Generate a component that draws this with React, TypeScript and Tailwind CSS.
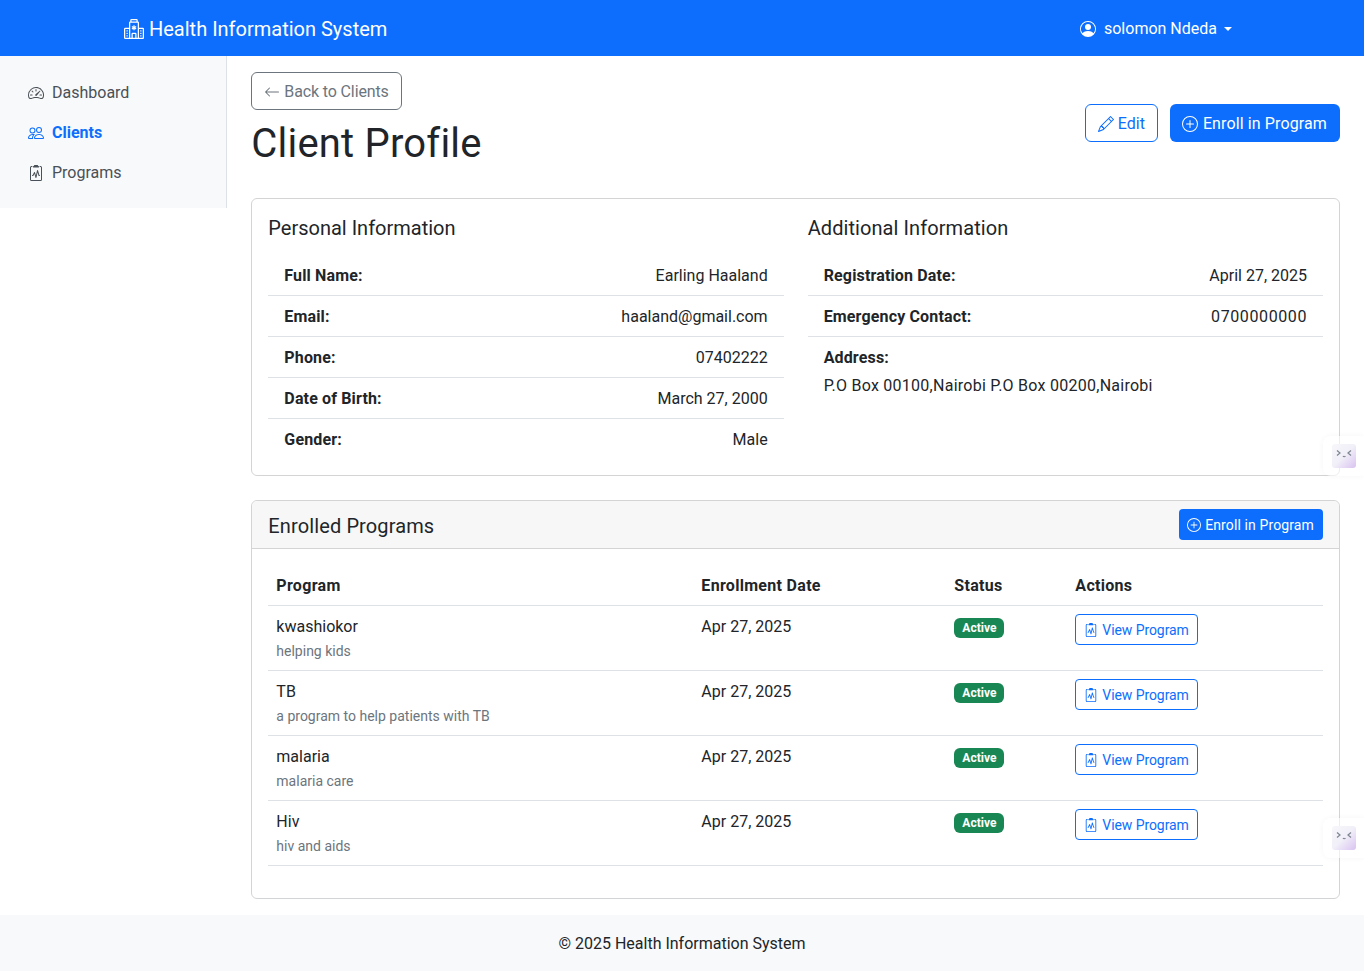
import {
  BsArrowLeft,
  BsClipboard2Pulse,
  BsHospital,
  BsPencil,
  BsPeople,
  BsPersonCircle,
  BsPlusCircle,
  BsSpeedometer2,
} from "react-icons/bs";

const PERSONAL = [
  ["Full Name:", "Earling Haaland"],
  ["Email:", "haaland@gmail.com"],
  ["Phone:", "07402222"],
  ["Date of Birth:", "March 27, 2000"],
  ["Gender:", "Male"],
];

const PROGRAMS = [
  { name: "kwashiokor", note: "helping kids" },
  { name: "TB", note: "a program to help patients with TB" },
  { name: "malaria", note: "malaria care" },
  { name: "Hiv", note: "hiv and aids" },
];

const NAV_ITEMS = [
  { label: "Dashboard", icon: BsSpeedometer2, active: false },
  { label: "Clients", icon: BsPeople, active: true },
  { label: "Programs", icon: BsClipboard2Pulse, active: false },
];

function InfoRow({ label, value, last, valueClass = "" }: { label: string; value: string; last?: boolean; valueClass?: string }) {
  return (
    <div className={`flex justify-between px-4 pt-[9px] pb-[7px] ${last ? "" : "border-b border-[#dee2e6]"}`}>
      <span className="font-bold tracking-[0.15px]">{label}</span>
      <span className={valueClass}>{value}</span>
    </div>
  );
}

function FloatingTab({ top }: { top: string }) {
  return (
    <div className={`absolute right-0 ${top} flex h-10 w-[41px] items-center justify-start rounded-l-lg bg-white/60 pl-[9px] shadow-[0_0_6px_rgba(0,0,0,0.04)]`}>
      <div className="h-6 w-6 rounded-[3px] bg-gradient-to-br from-[#f6f7fb] via-[#f1eff8] to-[#d9c2f0]">
        <svg viewBox="0 0 24 24" className="h-6 w-6" fill="none" stroke="#7d8590" strokeWidth="1.2">
          <path d="M5 6.5 8 9 5 11.5" />
          <path d="M19 6.5 16 9 19 11.5" />
          <path d="M11 12c.6 1 1.8 1 2.4 0" />
        </svg>
      </div>
    </div>
  );
}

export default function App() {
  return (
    <div className="relative flex min-h-screen flex-col overflow-hidden bg-white font-['Roboto',sans-serif] text-base leading-6 text-[#212529]">
      <header className="h-14 bg-[#0d6efd] text-white">
        <div className="mx-auto flex h-full w-[1140px] items-center justify-between px-3 pt-[2px]">
          <div className="flex items-center gap-[5px] text-xl">
            <BsHospital className="h-5 w-5" />
            Health Information System
          </div>
          <div className="flex items-center">
            <BsPersonCircle className="mr-2 ml-[1px] h-4 w-4" />
            solomon Ndeda
            <span className="ml-[7px] mr-2 h-0 w-0 border-x-4 border-t-4 border-x-transparent border-t-white" />
          </div>
        </div>
      </header>

      <div className="flex flex-1 items-start">
        <aside className="w-[227.33px] shrink-0 border-r border-[#dee2e6] bg-[#f8f9fa] px-3 py-4">
          <nav className="flex flex-col">
            {NAV_ITEMS.map(({ label, icon: Icon, active }) => (
              <a
                key={label}
                className={`flex items-center gap-2 px-4 pt-[9px] pb-[7px] ${active ? "font-bold text-[#0d6efd]" : "text-[#495057]"}`}
              >
                <Icon className="h-4 w-4" />
                {label}
              </a>
            ))}
          </nav>
        </aside>

        <main className="min-w-0 flex-1 px-6 pt-4 pb-4">
          <div className="mb-6 flex items-center justify-between">
            <div>
              <a className="mb-2 inline-flex h-[38px] items-center gap-1 rounded-md border border-[#6c757d] px-3 pt-[2px] tracking-[-0.13px] text-[#6c757d]">
                <BsArrowLeft className="h-4 w-4" />
                Back to Clients
              </a>
              <h1 className="mb-[6px] pt-[2px] text-[40px] leading-[48px] tracking-[0.2px]">Client Profile</h1>
            </div>
            <div className="flex gap-3">
              <a className="inline-flex h-[38px] items-center gap-1 rounded-md border border-[#0d6efd] px-3 pt-[2px] text-[#0d6efd]">
                <BsPencil className="h-4 w-4" />
                Edit
              </a>
              <a className="inline-flex h-[38px] items-center gap-[5px] rounded-md bg-[#0d6efd] pt-[2px] pr-[13px] pl-3 tracking-[0.12px] text-white">
                <BsPlusCircle className="h-4 w-4" />
                Enroll in Program
              </a>
            </div>
          </div>

          <section className="mb-6 grid grid-cols-2 gap-6 rounded-md border border-[#d3d4d5] p-4">
            <div>
              <h5 className="mb-[15px] pt-px text-xl leading-6">Personal Information</h5>
              {PERSONAL.map(([label, value], i) => (
                <InfoRow key={label} label={label} value={value} last={i === PERSONAL.length - 1} />
              ))}
            </div>
            <div>
              <h5 className="mb-[15px] pt-px text-xl leading-6 tracking-[0.08px]">Additional Information</h5>
              <InfoRow label="Registration Date:" value="April 27, 2025" />
              <InfoRow label="Emergency Contact:" value="0700000000" valueClass="tracking-[0.6px]" />
              <div className="px-4 pt-[9px] pb-[7px]">
                <div className="mb-1 font-bold tracking-[0.15px]">Address:</div>
                <div className="tracking-[0.26px]">P.O Box 00100,Nairobi P.O Box 00200,Nairobi</div>
              </div>
            </div>
          </section>

          <section className="rounded-md border border-[#d3d4d5]">
            <div className="flex items-center justify-between rounded-t-md border-b border-[#d3d4d5] bg-[#f7f7f7] px-4 py-2">
              <h5 className="pt-[2px] text-xl leading-6 tracking-[0.12px]">Enrolled Programs</h5>
              <a className="inline-flex h-[31px] items-center gap-1 rounded bg-[#0d6efd] pr-[9px] pl-2 text-sm tracking-[0.12px] text-white">
                <BsPlusCircle className="h-[14px] w-[14px]" />
                Enroll in Program
              </a>
            </div>
            <div className="p-4">
              <table className="mb-4 w-full table-fixed border-collapse">
                <colgroup>
                  <col className="w-[425px]" />
                  <col className="w-[253px]" />
                  <col className="w-[121px]" />
                  <col />
                </colgroup>
                <thead>
                  <tr className="border-b border-[#dee2e6] text-left tracking-[0.3px]">
                    <th className="px-2 pt-[9px] pb-[7px] font-bold">Program</th>
                    <th className="px-2 pt-[9px] pb-[7px] font-bold">Enrollment Date</th>
                    <th className="px-2 pt-[9px] pb-[7px] font-bold">Status</th>
                    <th className="px-2 pt-[9px] pb-[7px] font-bold">Actions</th>
                  </tr>
                </thead>
                <tbody>
                  {PROGRAMS.map(({ name, note }) => (
                    <tr key={name} className="border-b border-[#dee2e6] align-top">
                      <td className="px-2 pt-[9px] pb-[7px]">
                        <div>{name}</div>
                        <div className="text-sm leading-6 text-[#6c757d]">{note}</div>
                      </td>
                      <td className="px-2 pt-[9px] pb-[7px]">Apr 27, 2025</td>
                      <td className="p-2">
                        <span className="mt-1 inline-block rounded-md bg-[#198754] px-2 py-[4px] text-xs leading-3 font-bold text-white">
                          Active
                        </span>
                      </td>
                      <td className="p-2">
                        <a className="inline-flex h-[31px] items-center gap-1 rounded border border-[#0d6efd] px-2 text-sm tracking-[-0.08px] text-[#0d6efd]">
                          <BsClipboard2Pulse className="h-[14px] w-[14px]" />
                          View Program
                        </a>
                      </td>
                    </tr>
                  ))}
                </tbody>
              </table>
            </div>
          </section>
        </main>
      </div>

      <footer className="flex h-14 items-center justify-center bg-[#f8f9fa] pt-[2px]">
        © 2025 Health Information System
      </footer>

      <FloatingTab top="top-[436px]" />
      <FloatingTab top="top-[818px]" />
    </div>
  );
}
